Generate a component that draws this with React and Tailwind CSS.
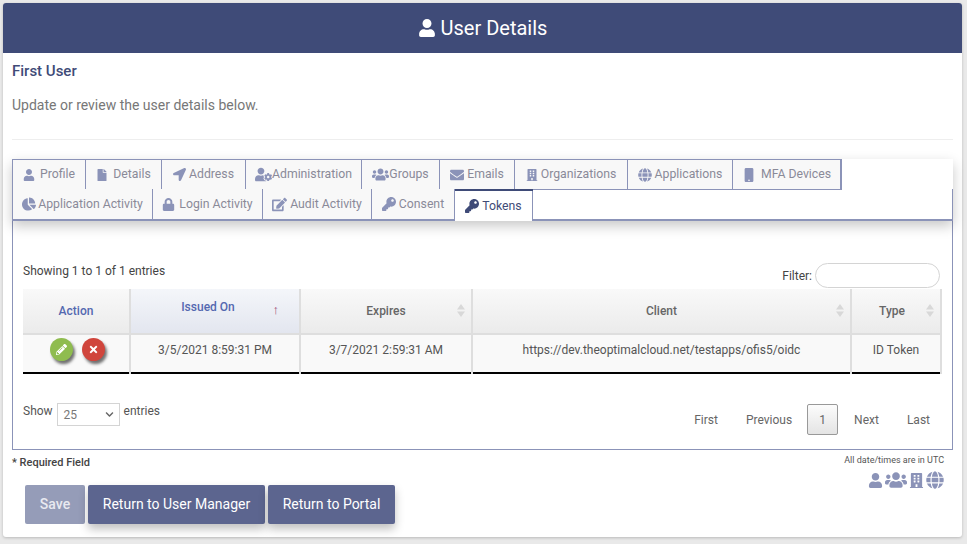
import React from "react";
import { FaUser, FaFile, FaLocationArrow, FaUserCog, FaUsers, FaEnvelope, FaBuilding, FaGlobe, FaMobile, FaChartPie, FaLock, FaEdit, FaKey, FaPencilAlt, FaTimes, FaChevronDown } from "react-icons/fa";

const row1 = [
  [FaUser, "Profile", "w-[73px]", "gap-[5px]", 12],
  [FaFile, "Details", "w-[76px]", "gap-[5px]", 12],
  [FaLocationArrow, "Address", "w-[84px]", "gap-[3px]", 13],
  [FaUserCog, "Administration", "w-[116px]", "gap-0", 17],
  [FaUsers, "Groups", "w-[78px]", "gap-0", 17],
  [FaEnvelope, "Emails", "w-[75px]", "gap-[3px]", 14],
  [FaBuilding, "Organizations", "w-[113px]", "gap-[3px]", 12],
  [FaGlobe, "Applications", "w-[105px]", "gap-[3px]", 14],
  [FaMobile, "MFA Devices", "w-[108px]", "gap-[5px]", 14],
];
const row2 = [
  [FaChartPie, "Application Activity", "w-[140px]", "gap-[2px]", 14],
  [FaLock, "Login Activity", "w-[110px]", "gap-[4px]", 13],
  [FaEdit, "Audit Activity", "w-[109px]", "gap-[3px]", 15],
  [FaKey, "Consent", "w-[83px]", "gap-[3px]", 14],
];

function Tab({ icon: Icon, label, width, gap, size, active }) {
  return (
    <div className={`flex h-full items-center justify-center border-r border-[#8b93b8] ${width} ${gap} ${active ? "bg-white text-[#3f4b78]" : "bg-[#f8f8f8] text-[#8a8a98]"}`}>
      <Icon size={size} className={active ? "text-[#3f4b78]" : "text-[#8b93b8]"} />
      <span>{label}</span>
    </div>
  );
}

function SortArrows() {
  return (
    <svg width="8" height="13" viewBox="0 0 8 13" className="absolute right-[6px] top-[15px]">
      <path d="M4 0L8 5.5H0Z M4 13L0 7.5H8Z" fill="#d8d8d8" />
    </svg>
  );
}

const th = "relative border-r-2 border-b-2 border-[#dedede] bg-gradient-to-b from-[#f9f9f9] to-[#ebebeb] text-[12px] font-medium text-[#666] p-0";
const td = "border-r-2 border-[#dedede] text-center text-[12px] text-[#555] pb-[8px] align-middle";

export default function App() {
  return (
    <div className="h-[544px] w-[967px] overflow-hidden bg-[#e9e9e9] pl-[3px] pt-[3px] font-['Roboto',sans-serif]">
      <div className="h-[534px] w-[959px] rounded-[3px] bg-white shadow-[0_1px_3px_rgba(0,0,0,0.2)]">
        <header className="flex h-[50px] items-center justify-center gap-[5px] rounded-t-[3px] bg-[#3f4b78] text-[20px] text-white">
          <FaUser size={18} />
          <span>User Details</span>
        </header>

        <div className="px-[9px]">
          <h2 className="mt-[9px] text-[15px] leading-[18px] font-medium text-[#3f4b78]">First User</h2>
          <p className="mt-[16px] text-[14px] leading-[18px] text-[#777]">Update or review the user details below.</p>
          <hr className="mt-[25px] border-[#eeeeee]" />

          <div className="mt-[19px] w-[941px]">
            <div className="relative z-10 bg-white text-[12.25px] shadow-[0_5px_12px_rgba(0,0,0,0.22)]">
              <div className="flex h-[31px] w-fit border border-[#8b93b8]">
                {row1.map(([i, l, w, g, s]) => <Tab key={l} icon={i} label={l} width={w} gap={g} size={s} />)}
              </div>
              <div className="-mt-px flex h-[32px] border-x border-b-2 border-[#8b93b8]">
                {row2.map(([i, l, w, g, s]) => <Tab key={l} icon={i} label={l} width={w} gap={g} size={s} />)}
                <div className="-mb-[2px] h-[32px] border-t-2 border-t-[#3f4b78]">
                  <Tab icon={FaKey} label="Tokens" width="w-[78px]" gap="gap-[3px]" size={14} active />
                </div>
              </div>
            </div>

            <div className="h-[229px] border-x border-b border-[#8b93b8] px-[10px]">
              <div className="flex h-[68px] items-end justify-between">
                <span className="pb-[9px] text-[12px] text-[#444]">Showing 1 to 1 of 1 entries</span>
                <label className="flex items-center gap-[3px] pr-[2px] pb-[1px] text-[12px] text-[#444]">
                  Filter:
                  <span className="h-[25px] w-[125px] rounded-full border border-[#d4d4d4] bg-white" />
                </label>
              </div>

              <table className="w-[918px] table-fixed border-b-2 border-black">
                <colgroup>
                  <col className="w-[107px]" /><col className="w-[170px]" /><col className="w-[172px]" /><col className="w-[379px]" /><col className="w-[90px]" />
                </colgroup>
                <thead>
                  <tr className="h-[45px]">
                    <th className={`${th} !text-[#5468b0]`}>Action</th>
                    <th className={`${th} !from-[#f4f6fa] !to-[#e3e6ef] !text-[#5468b0]`}>
                      <span className="relative -left-[7px] -top-[4px]">Issued On</span>
                      <span className="absolute right-[20px] top-[13px] text-[13px] leading-[16px] font-normal text-[#a04b78]">↑</span>
                    </th>
                    <th className={th}>Expires<SortArrows /></th>
                    <th className={th}>Client<SortArrows /></th>
                    <th className={`${th} border-r-0`}><span className="relative -left-[4px]">Type</span><SortArrows /></th>
                  </tr>
                </thead>
                <tbody>
                  <tr className="h-[39px] bg-[#f9f9f9]">
                    <td className={`${td} pb-0`}>
                      <div className="flex justify-center gap-[9px] pl-[2px]">
                        <span className="flex h-[23px] w-[23px] items-center justify-center rounded-full bg-[#8fbc4f] text-white shadow-[2px_3px_3px_rgba(0,0,0,0.55)]"><FaPencilAlt size={11} /></span>
                        <span className="flex h-[23px] w-[23px] items-center justify-center rounded-full bg-[#d0453c] text-white shadow-[2px_3px_3px_rgba(0,0,0,0.55)]"><FaTimes size={11} /></span>
                      </div>
                    </td>
                    <td className={td}>3/5/2021 8:59:31 PM</td>
                    <td className={td}>3/7/2021 2:59:31 AM</td>
                    <td className={td}>https://dev.theoptimalcloud.net/testapps/ofis5/oidc</td>
                    <td className={`${td} border-r-0`}>ID Token</td>
                  </tr>
                </tbody>
              </table>

              <div className="mt-[28px] flex items-start justify-between">
                <div className="flex items-start gap-[4px] text-[12px] leading-[18px] text-[#555]">
                  <span>Show</span>
                  <span className="mt-[1px] flex h-[23px] w-[63px] items-center justify-between border border-[#d4d4d4] pl-[6px] pr-[5px] text-[#777]">
                    25 <FaChevronDown size={9} className="text-[#666]" />
                  </span>
                  <span>entries</span>
                </div>
                <div className="mt-[2px] flex items-center pr-[1px] text-[12px] text-[#666]">
                  <span className="mr-[28px]">First</span>
                  <span className="mr-[15px]">Previous</span>
                  <span className="flex h-[31px] w-[31px] items-center justify-center rounded-[2px] border border-[#999] bg-gradient-to-b from-[#fcfcfc] to-[#e4e4e4]">1</span>
                  <span className="ml-[16px]">Next</span>
                  <span className="ml-[28px] mr-[11px]">Last</span>
                </div>
              </div>
            </div>

            <div className="flex items-start justify-between">
              <span className="mt-[5px] text-[11px] font-medium text-[#444]">* Required Field</span>
              <div className="mt-[5px] flex flex-col items-end pr-[9px]">
                <span className="text-[9px] leading-[11px] text-[#555]">All date/times are in UTC</span>
                <div className="mt-[3px] flex items-center gap-[2px] text-[#8b93b8]">
                  <FaUser size={15} /><FaUsers size={22} /><FaBuilding size={15} /><FaGlobe size={18} />
                </div>
              </div>
            </div>

            <div className="-mt-[6px] ml-[13px] flex gap-[3px] text-[14px]">
              <button className="h-[39px] w-[60px] rounded-[2px] bg-[#959cb8] font-medium text-[#e8e9f0]">Save</button>
              <button className="h-[39px] w-[177px] rounded-[2px] bg-[#5c658f] text-white shadow-[0_5px_10px_rgba(0,0,0,0.25)]">Return to User Manager</button>
              <button className="h-[39px] w-[127px] rounded-[2px] bg-[#5c658f] text-white shadow-[0_5px_10px_rgba(0,0,0,0.25)]">Return to Portal</button>
            </div>
          </div>
        </div>
      </div>
    </div>
  );
}
